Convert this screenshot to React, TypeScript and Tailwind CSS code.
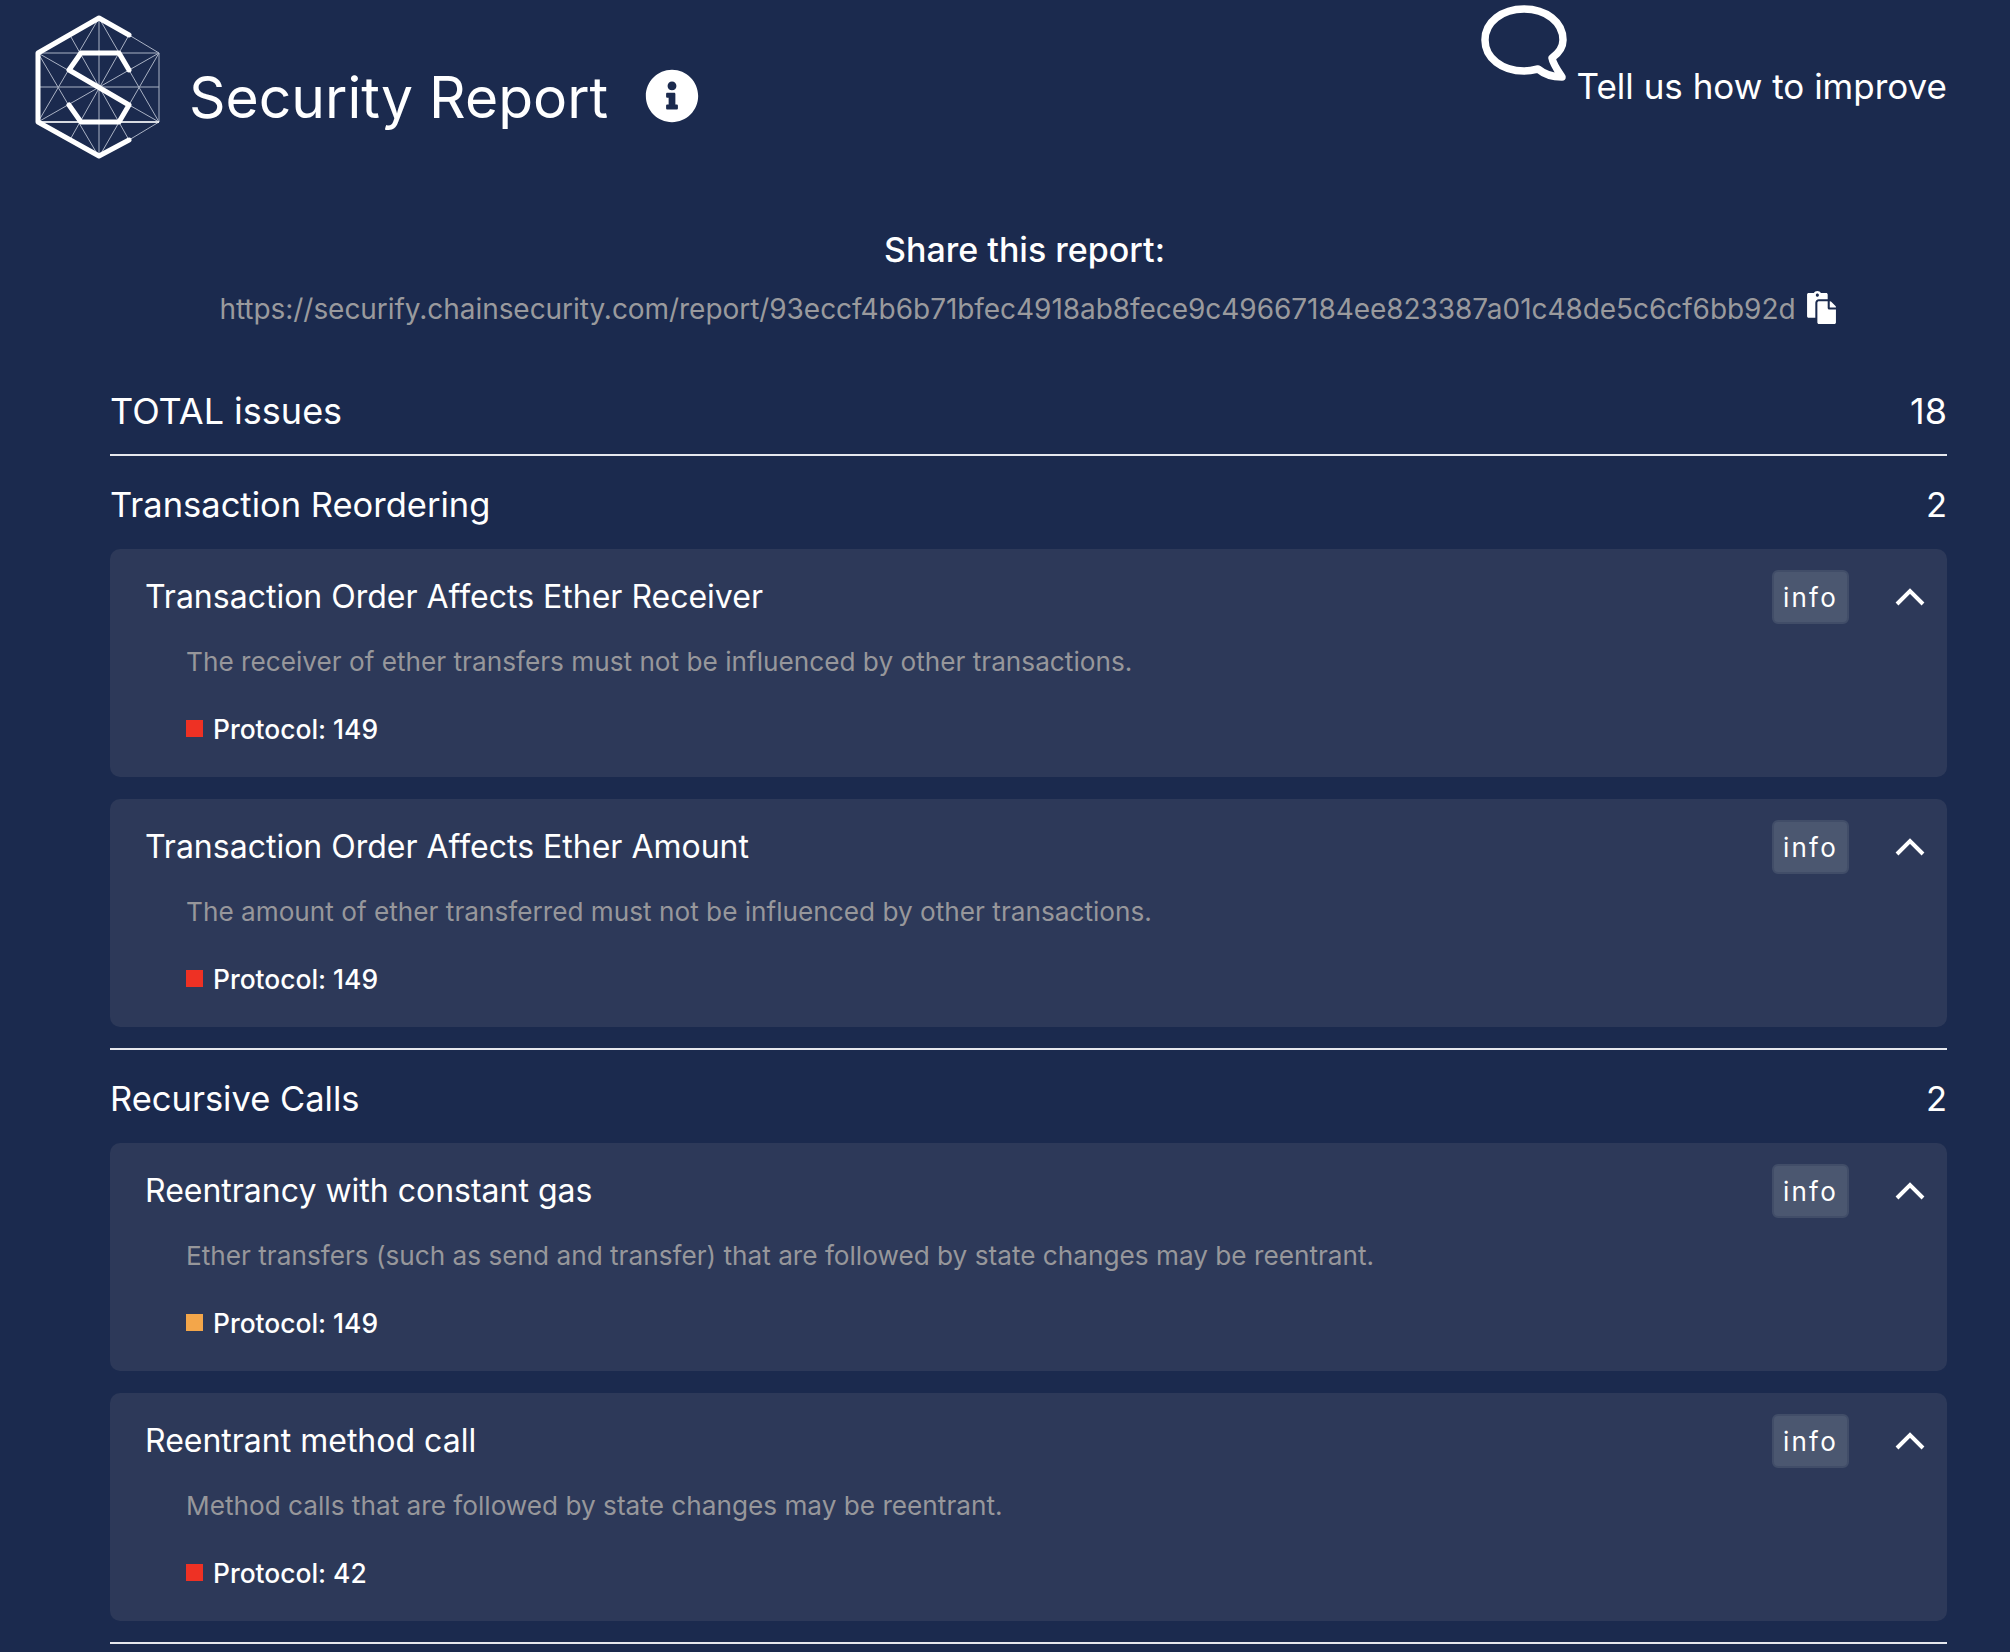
import React from 'react';
import { FaInfoCircle, FaPaste } from 'react-icons/fa';

const Logo = () => (
  <svg viewBox="0 0 160 160" className="w-[160px] h-[160px] shrink-0" fill="none">
    <g stroke="#aab2c4" strokeWidth="1">
      <path d="M17 43H138V112H17M17 77H138M78 8V147M17 43L138 112M138 43L17 112M78 8L138 112M78 8L17 112M78 147L138 43M78 147L17 43M50 27L108 130M108 25L50 128M108 25L138 43M108 130L138 112" />
    </g>
    <path d="M17 112H138" stroke="#ffffff" strokeWidth="1.5" />
    <path d="M108 25L78 8L17 43V112L78 146L108 130" stroke="#ffffff" strokeWidth="5" strokeLinecap="round" strokeLinejoin="round" />
    <path d="M108 60L98 43H60L48 60L108 95L98 112H60L48 95" stroke="#ffffff" strokeWidth="5" strokeLinecap="round" strokeLinejoin="round" />
  </svg>
);

const Bubble = () => (
  <svg viewBox="0 0 90 80" className="w-[90px] h-[80px] shrink-0" fill="none">
    <path
      d="M46 6C24 6 7 19 7 37C7 55 24 68 46 68C51 68 56 67 60 66C66 71 75 74 84 74C80 68 75 61 74 55C81 50 85 44 85 37C85 19 68 6 46 6Z"
      stroke="#ffffff"
      strokeWidth="7.5"
      strokeLinejoin="round"
    />
  </svg>
);

const Chevron = () => (
  <svg viewBox="0 0 30 20" className="w-[30px] h-[20px]" fill="none">
    <path d="M2 17L15 4L28 17" stroke="#ffffff" strokeWidth="4" />
  </svg>
);

const IssueCard = ({ title, text, count, color }: { title: string; text: string; count: number; color: string }) => (
  <div className="h-[228px] rounded-[10px] bg-[#2d3959] pl-[35px] pr-[22px] pt-[21px]">
    <div className="flex items-center justify-between h-[54px]">
      <div className="text-[32px] text-white">{title}</div>
      <div className="flex items-center gap-[46px]">
        <div className="w-[77px] h-[54px] flex items-center justify-center rounded-[6px] border-2 border-[#414d68] bg-[#4b5770] text-[26px] tracking-[2.2px] text-white">
          info
        </div>
        <Chevron />
      </div>
    </div>
    <div className="ml-[41px] mt-[18px] text-[26.2px] leading-[40px] text-[#97979b]">{text}</div>
    <div className="ml-[41px] mt-[27px] flex items-center gap-[10px]">
      <div className={`w-[17px] h-[17px] -mt-[2px] ${color}`} />
      <div className="text-[26.4px] leading-[40px] font-medium text-white">Protocol: {count}</div>
    </div>
  </div>
);

const Section = ({ name, total, children }: { name: string; total: number; children: React.ReactNode }) => (
  <div className="border-b-2 border-[#e6e8ee] pb-[21px]">
    <div className="flex items-center justify-between h-[93px] pt-[4px] text-[34.5px] text-white">
      <span>{name}</span>
      <span>{total}</span>
    </div>
    <div className="flex flex-col gap-[22px]">{children}</div>
  </div>
);

export default function App() {
  return (
    <div className="h-[1652px] overflow-hidden bg-[#1b2a4e] text-white font-['Inter','Open_Sans',sans-serif]">
      <div className="flex items-start justify-between pr-[63px]">
        <div className="flex items-center pl-[21px] pt-[10px]">
          <Logo />
          <h1 className="ml-[8px] mt-[16px] text-[57px] leading-[70px] text-white">Security Report</h1>
          <FaInfoCircle className="ml-[37px] mt-[12px] text-[54px] text-white" />
        </div>
        <div className="flex items-start pt-[3px]">
          <Bubble />
          <div className="ml-[9px] mt-[59px] text-[35px] leading-[48px]">Tell us how to improve</div>
        </div>
      </div>

      <div className="ml-[110px] mr-[63px]">
        <div className="mt-[58px] pr-[8px] text-center text-[34px] leading-[44px] font-medium">Share this report:</div>
        <div className="mt-[17px] flex items-center justify-center gap-[9px]">
          <span className="text-[28px] leading-[40px] tracking-[-0.05px] text-[#9a9a9d]">
            https://securify.chainsecurity.com/report/93eccf4b6b71bfec4918ab8fece9c49667184ee823387a01c48de5c6cf6bb92d
          </span>
          <FaPaste className="text-[33px] text-white -mt-[4px]" />
        </div>

        <div className="mt-[45px] flex items-center justify-between h-[82px] border-b-2 border-[#e6e8ee] pb-[7px] text-[36px] text-white">
          <span>TOTAL issues</span>
          <span>18</span>
        </div>
        <Section name="Transaction Reordering" total={2}>
          <IssueCard
            title="Transaction Order Affects Ether Receiver"
            text="The receiver of ether transfers must not be influenced by other transactions."
            count={149}
            color="bg-[#ee3124]"
          />
          <IssueCard
            title="Transaction Order Affects Ether Amount"
            text="The amount of ether transferred must not be influenced by other transactions."
            count={149}
            color="bg-[#ee3124]"
          />
        </Section>
        <Section name="Recursive Calls" total={2}>
          <IssueCard
            title="Reentrancy with constant gas"
            text="Ether transfers (such as send and transfer) that are followed by state changes may be reentrant."
            count={149}
            color="bg-[#f3a64a]"
          />
          <IssueCard
            title="Reentrant method call"
            text="Method calls that are followed by state changes may be reentrant."
            count={42}
            color="bg-[#ee3124]"
          />
        </Section>
      </div>
    </div>
  );
}
